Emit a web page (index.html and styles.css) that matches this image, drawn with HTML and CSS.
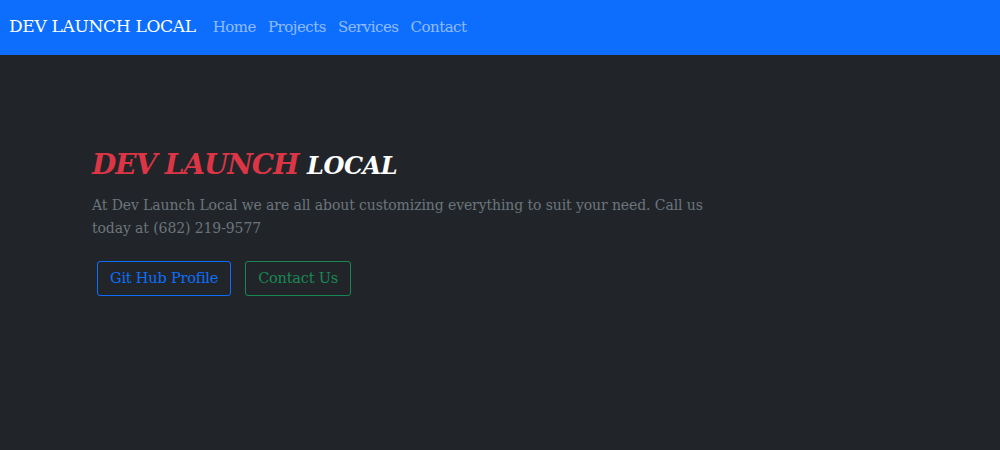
FILE: index.html
```html
<!DOCTYPE html>
<html lang="en">
<head>
<meta charset="utf-8">
<title>Dev Launch Local</title>
<link rel="stylesheet" href="styles.css">
</head>
<body>
<nav class="navbar">
  <a class="brand" href="#">DEV LAUNCH LOCAL</a>
  <ul class="nav-links">
    <li><a href="#">Home</a></li>
    <li><a href="#">Projects</a></li>
    <li><a href="#">Services</a></li>
    <li><a href="#">Contact</a></li>
  </ul>
</nav>
<main class="hero">
  <h1 class="title"><span class="red">DEV LAUNCH</span> <span class="small">LOCAL</span></h1>
  <p class="lead">At Dev Launch Local we are all about customizing everything to suit your need. Call us today at (682) 219-9577</p>
  <div class="actions">
    <a class="btn btn-blue" href="#">Git Hub Profile</a>
    <a class="btn btn-green" href="#">Contact Us</a>
  </div>
</main>
</body>
</html>
```
FILE: styles.css
```css
* { box-sizing: border-box; }
html, body { margin: 0; height: 100%; }
body {
  background: #212529;
  font-family: "DejaVu Serif", "Liberation Serif", serif;
  color: #6c757d;
}
.navbar {
  background: #0d6efd;
  height: 55px;
  display: flex;
  align-items: center;
  padding: 0 9px;
}
.brand {
  color: #fff;
  text-decoration: none;
  font-size: 17px;
  letter-spacing: -0.3px;
  margin-right: 17px;
  padding-bottom: 4px;
}
.nav-links {
  list-style: none;
  display: flex;
  gap: 12px;
  margin: 0;
  padding: 0 0 2px;
}
.nav-links a {
  color: rgba(255,255,255,0.55);
  text-decoration: none;
  font-size: 15px;
  letter-spacing: -0.5px;
}
.hero {
  padding: 92px 92px 0;
}
.title {
  margin: 0;
  font-style: italic;
  font-weight: bold;
  font-size: 28px;
  letter-spacing: -1.1px;
  line-height: 36px;
  color: #fff;
}
.title .red { color: #dc3545; }
.title .small { font-size: 24px; letter-spacing: -0.4px; }
.lead {
  margin: 10px 0 0;
  width: 640px;
  font-size: 14px;
  letter-spacing: -0.1px;
  line-height: 23px;
}
.actions {
  display: flex;
  gap: 14px;
  margin: 21px 0 0 5px;
}
.btn {
  display: inline-block;
  height: 35px;
  line-height: 33px;
  padding: 0 12px;
  border: 1px solid;
  border-radius: 3px;
  font-size: 14.5px;
  letter-spacing: -0.2px;
  text-decoration: none;
}
.btn-blue { color: #0d6efd; border-color: #0d6efd; }
.btn-green { color: #198754; border-color: #198754; }
```
